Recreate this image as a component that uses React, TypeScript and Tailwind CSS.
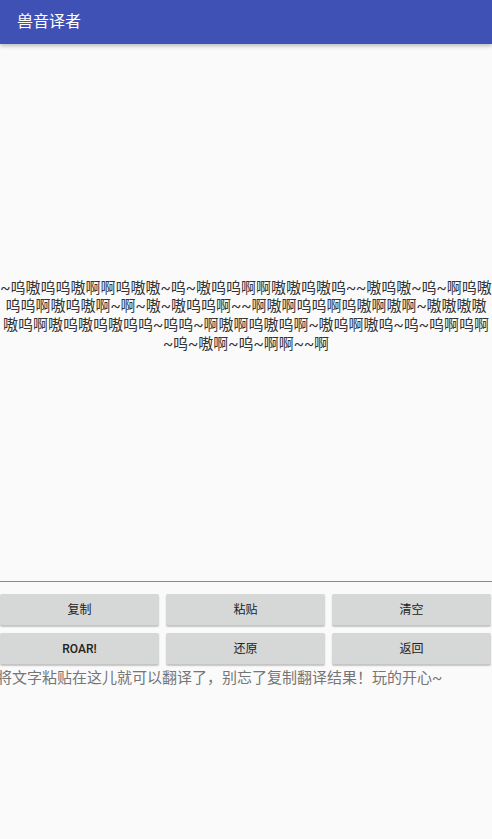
const roar =
  "~呜嗷呜呜嗷啊啊呜嗷嗷~呜~嗷呜呜啊啊嗷嗷呜嗷呜~~嗷呜嗷~呜~啊呜嗷" +
  "呜呜啊嗷呜嗷啊~啊~嗷~嗷呜呜啊~~啊嗷啊呜呜啊呜嗷啊嗷啊~嗷嗷嗷嗷" +
  "嗷呜啊嗷呜嗷呜嗷呜呜~呜呜~啊嗷啊呜嗷呜啊~嗷呜啊嗷呜~呜~呜啊呜啊" +
  "~呜~嗷啊~呜~啊啊~~啊";

const buttons = ["复制", "粘贴", "清空", "ROAR!", "还原", "返回"];

export default function App() {
  return (
    <div
      className="flex h-[839px] w-[492px] flex-col overflow-hidden bg-[#fafafa]"
      style={{ fontFamily: 'Roboto, "Noto Sans CJK SC", sans-serif' }}
    >
      {/* Toolbar */}
      <header className="relative z-10 flex h-[44px] shrink-0 items-center bg-[#3f51b5] pl-[17px] shadow-[0_2px_4px_rgba(0,0,0,0.25)]">
        <h1 className="text-[16px] font-normal text-white">兽音译者</h1>
      </header>

      {/* Output text */}
      <div className="flex h-[537px] shrink-0 items-center justify-center pt-[7px]">
        <p className="w-[492px] text-center text-[15px] leading-[18.7px] text-[#333]">{roar}</p>
      </div>

      <div className="h-px shrink-0 bg-[#8a8a8a]" />

      {/* Actions */}
      <div className="mt-[12px] grid w-[491px] grid-cols-3 gap-x-[7px] gap-y-[8px]">
        {buttons.map((b) => (
          <button
            key={b}
            className={`h-[31px] rounded-[2px] bg-[#d6d7d7] text-[12px] text-[#222] shadow-[0_1.5px_1.5px_rgba(0,0,0,0.22)] ${
              b === "ROAR!" ? "font-medium" : "font-normal"
            }`}
          >
            {b}
          </button>
        ))}
      </div>

      <p className="-ml-[3px] mt-[4px] text-[15px] leading-[20px] text-[#757575]">
        将文字粘贴在这儿就可以翻译了，别忘了复制翻译结果！玩的开心~
      </p>
    </div>
  );
}
